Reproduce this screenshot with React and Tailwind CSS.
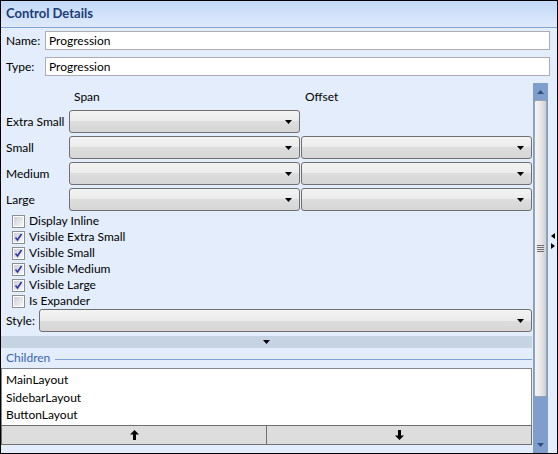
import React from 'react';

const font = { fontFamily: 'Lato, "Noto Sans", sans-serif' };

function Arrow({ className = '' }) {
    return (
        <svg width="7" height="4" viewBox="0 0 7 4" className={className}>
            <path d="M0 0 H7 L3.5 4 Z" fill="#000" />
        </svg>
    );
}

function Combo({ className = '' }) {
    return (
        <div className={`h-[23px] rounded-[3px] border border-[#707070] bg-[linear-gradient(#f3f3f3_0%,#ebebeb_50%,#dddddd_50%,#d6d6d6_100%)] flex items-center justify-end pr-[7px] ${className}`}>
            <Arrow />
        </div>
    );
}

function Check({ checked, label }) {
    return (
        <div className="h-4 flex items-center pl-[11px] gap-[4px]">
            <div className="w-[13px] h-[13px] border border-[#8e8f8f] bg-white p-[1px]">
                <div className="w-full h-full bg-[linear-gradient(135deg,#cbcfd5,#f6f6f6)] relative">
                    {checked && (
                        <svg width="11" height="11" viewBox="0 0 11 11" className="absolute -left-[1px] -top-[1px]">
                            <path d="M2.5 5.5 L4.5 8 L8.5 2" stroke="#3a3f9c" strokeWidth="1.8" fill="none" />
                        </svg>
                    )}
                </div>
            </div>
            <span className="text-[12px] text-black">{label}</span>
        </div>
    );
}

function ComboRow({ label, offset = true }) {
    return (
        <div className="flex items-center h-[23px] mb-[3px]">
            <span className="w-[68px] pl-[5px] text-[12px]">{label}</span>
            <Combo className="w-[231px]" />
            {offset && <Combo className="w-[231px] ml-[1px]" />}
        </div>
    );
}

export default function App() {
    return (
        <div style={font} className="w-[558px] h-[454px] border border-black bg-[#e3edfb] flex flex-col overflow-hidden text-black">
            {/* Header */}
            <div className="h-[27px] shrink-0 border-b border-[#7fa4d6] bg-[linear-gradient(#c3d9f7,#dfeafb)] flex items-center pl-[5px]">
                <span className="text-[13px] font-bold text-[#1b3c7b]">Control Details</span>
            </div>

            {/* Name / Type */}
            <div className="flex items-center mt-[3px] pr-[7px]">
                <span className="w-[44px] pl-[5px] text-[12px]">Name:</span>
                <div className="flex-1 h-[19px] border border-[#abadb3] bg-white flex items-center pl-[3px] text-[12px]">Progression</div>
            </div>
            <div className="flex items-center mt-[7px] pr-[7px]">
                <span className="w-[44px] pl-[5px] text-[12px]">Type:</span>
                <div className="flex-1 h-[19px] border border-[#abadb3] bg-white flex items-center pl-[3px] text-[12px]">Progression</div>
            </div>

            {/* Scroll area */}
            <div className="flex flex-1 mt-[7px] min-h-0">
                <div className="w-[531px] shrink-0 flex flex-col">
                    <div className="flex h-[27px] items-center text-[12px]">
                        <span className="ml-[73px] w-[231px]">Span</span>
                        <span>Offset</span>
                    </div>
                    <ComboRow label="Extra Small" offset={false} />
                    <ComboRow label="Small" />
                    <ComboRow label="Medium" />
                    <ComboRow label="Large" />
                    <div className="-mt-[1px]">
                        <Check label="Display Inline" />
                        <Check checked label="Visible Extra Small" />
                        <Check checked label="Visible Small" />
                        <Check checked label="Visible Medium" />
                        <Check checked label="Visible Large" />
                        <Check label="Is Expander" />
                    </div>
                    <div className="flex items-center h-[23px]">
                        <span className="w-[38px] pl-[5px] text-[12px]">Style:</span>
                        <Combo className="flex-1" />
                    </div>
                    <div className="h-[12px] mt-[4px] bg-[#c6d3e3] flex items-center justify-center">
                        <Arrow />
                    </div>
                    <div className="flex items-center h-[20px] pl-[5px] gap-[5px]">
                        <span className="text-[12px] text-[#3867b2]">Children</span>
                        <div className="flex-1 h-px bg-[#7da3d3] mt-[2px]" />
                    </div>
                    <div className="h-[58px] border border-[#828790] bg-white pt-[2px] pl-[4px] text-[12px] leading-[17.5px]">
                        <div>MainLayout</div>
                        <div>SidebarLayout</div>
                        <div>ButtonLayout</div>
                    </div>
                    <div className="flex h-[20px] -mt-[1px]">
                        <div className="w-[266px] border border-[#707070] bg-[#dddddd] flex items-center justify-center">
                            <svg width="9" height="10" viewBox="0 0 9 10">
                                <path d="M4.5 0 L9 4.5 L6 4.5 L6 10 L3 10 L3 4.5 L0 4.5 Z" fill="#000" />
                            </svg>
                        </div>
                        <div className="flex-1 -ml-[1px] border border-[#707070] bg-[#dddddd] flex items-center justify-center">
                            <svg width="9" height="10" viewBox="0 0 9 10">
                                <path d="M4.5 10 L9 5.5 L6 5.5 L6 0 L3 0 L3 5.5 L0 5.5 Z" fill="#000" />
                            </svg>
                        </div>
                    </div>
                </div>

                {/* Scrollbar */}
                <div className="w-[15px] ml-[1px] shrink-0 bg-[#7f9ecb] flex flex-col">
                    <div className="h-[17px] flex items-center justify-center">
                        <svg width="7" height="4" viewBox="0 0 7 4"><path d="M0 4 H7 L3.5 0 Z" fill="#2f4f7f" /></svg>
                    </div>
                    <div className="h-[297px] mx-[1px] rounded-[2px] border border-[#9aa4b2] bg-[linear-gradient(90deg,#f4f4f4,#e6e6e6_55%,#cfcfcf)] flex items-center justify-center">
                        <div className="flex flex-col gap-[1px]">
                            <div className="w-[7px] h-px bg-[#6f6f6f]" />
                            <div className="w-[7px] h-px bg-[#6f6f6f]" />
                            <div className="w-[7px] h-px bg-[#6f6f6f]" />
                            <div className="w-[7px] h-px bg-[#6f6f6f]" />
                        </div>
                    </div>
                    <div className="flex-1 flex items-end justify-center pb-[6px]">
                        <svg width="7" height="4" viewBox="0 0 7 4"><path d="M0 0 H7 L3.5 4 Z" fill="#2f4f7f" /></svg>
                    </div>
                </div>

                {/* Splitter strip */}
                <div className="flex-1 flex flex-col items-center justify-center gap-[4px] pb-[54px]">
                    <svg width="4" height="6" viewBox="0 0 4 6"><path d="M4 0 V6 L0 3 Z" fill="#000" /></svg>
                    <svg width="4" height="6" viewBox="0 0 4 6"><path d="M0 0 V6 L4 3 Z" fill="#000" /></svg>
                </div>
            </div>
        </div>
    );
}
